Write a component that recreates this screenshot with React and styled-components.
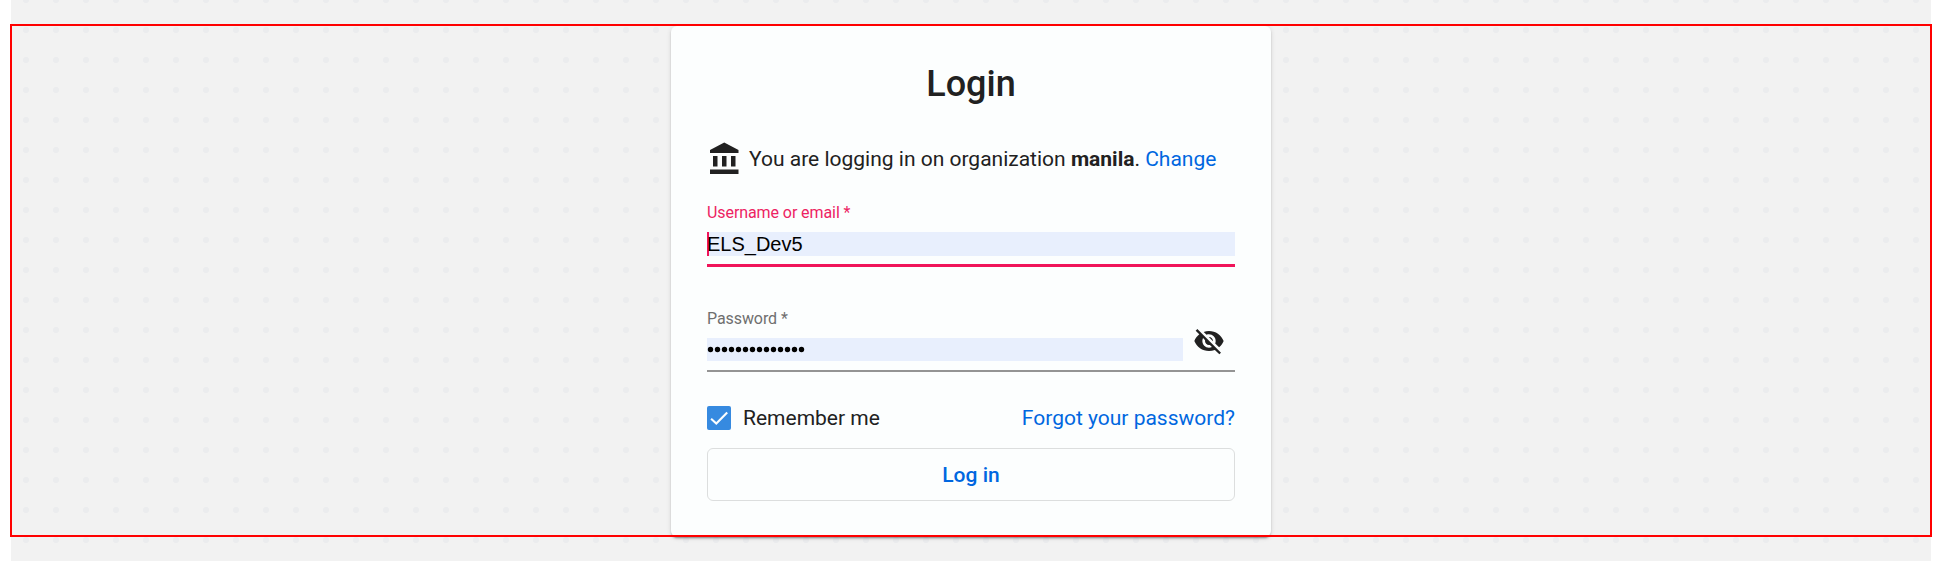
import React from "react";
import styled, { createGlobalStyle } from "styled-components";

const Global = createGlobalStyle`
  *, *::before, *::after { box-sizing: border-box; }
  body { margin: 0; background: #fff; }
`;

const Page = styled.div`
  height: 561px;
  margin: 0 11px;
  padding: 24px 0;
  font-family: Roboto, "Liberation Sans", sans-serif;
  font-size: 21px;
  line-height: 30px;
  color: #212121;
  background:
    radial-gradient(circle at 15px 15px, #ebecee 2.8px, transparent 3.4px) 0 -15px / 30px 30px,
    #f2f2f2;
`;

const Outline = styled.div`
  position: relative;
  display: flex;
  justify-content: center;
  height: 513px;
  margin: 0 -1px;
  padding-top: 2px;

  &::after {
    content: "";
    position: absolute;
    inset: 0;
    border: 2px solid #ff0000;
    pointer-events: none;
  }
`;

const Card = styled.main`
  display: flex;
  flex-direction: column;
  width: 600px;
  height: 511px;
  padding: 36px 36px 35px;
  border-radius: 6px;
  background: #fcfefe;
  box-shadow: 0 3px 1px -2px rgba(0, 0, 0, 0.2), 0 2px 2px 0 rgba(0, 0, 0, 0.14),
    0 1px 5px 0 rgba(0, 0, 0, 0.12);

  & > * {
    flex-shrink: 0;
  }
`;

const Title = styled.h1`
  margin: 0;
  font-size: 36px;
  line-height: 44px;
  font-weight: 500;
  text-align: center;
`;

const Organization = styled.div`
  display: flex;
  align-items: center;
  gap: 6px;
  height: 36px;
  margin-top: 35px;
  white-space: nowrap;
`;

const Icon = styled.svg`
  flex: none;
  width: ${(p) => p.$size}px;
  height: ${(p) => p.$size}px;
  fill: currentColor;
`;

const Link = styled.a`
  color: #0067e0;
  text-decoration: none;
`;

const Field = styled.div`
  display: flex;
  flex-direction: column;
  height: ${(p) => p.$height}px;
  margin-top: ${(p) => p.$top}px;
  border-bottom: ${(p) => (p.$active ? "3px solid #f0145a" : "2px solid #949494")};
`;

const Label = styled.label`
  height: 20px;
  margin-bottom: 9px;
  font-size: 16px;
  line-height: 20px;
  letter-spacing: -0.08px;
  color: ${(p) => (p.$active ? "#ed2363" : "#6f6f6f")};
`;

const InputRow = styled.div`
  display: flex;
  align-items: flex-start;
  height: 24px;
`;

const Value = styled.div`
  flex: 1;
  height: ${(p) => p.$height}px;
  border-left: ${(p) => (p.$active ? "2px solid #f0145a" : "0")};
  background: #e8effd;
  color: #000;
  font: 20px/24px "Liberation Sans", Arial, sans-serif;
  text-indent: ${(p) => (p.$active ? "-2px" : "0")};
`;

const Dots = styled.svg`
  display: block;
  width: 100px;
  height: 23px;
`;

const IconButton = styled.span`
  display: flex;
  justify-content: center;
  width: 52px;
  margin-top: -13px;
`;

const Options = styled.div`
  display: flex;
  align-items: center;
  justify-content: space-between;
  height: 30px;
  margin-top: 31px;
`;

const Remember = styled.label`
  display: flex;
  align-items: center;
  gap: 12px;
`;

const Checkbox = styled.span`
  width: 24px;
  height: 24px;
  border-radius: 2px;
  background: #368ae0;
`;

const Check = styled.svg`
  display: block;
  width: 24px;
  height: 24px;
  fill: none;
  stroke: #fcfefe;
  stroke-width: 2.1;
`;

const Submit = styled.button`
  height: 53px;
  margin-top: 15px;
  padding: 0;
  border: 1px solid #dcdede;
  border-radius: 6px;
  background: transparent;
  color: #0067e0;
  font: 500 21px/30px Roboto, sans-serif;
`;

export default function App() {
  return (
    <Page>
      <Global />
      <Outline>
        <Card>
          <Title>Login</Title>
          <Organization>
            <Icon $size={36} viewBox="0 0 24 24">
              <path d="M4 10v7h3v-7H4zm6 0v7h3v-7h-3zM2 22h19v-3H2v3zm14-12v7h3v-7h-3zm-4.500-9L2 6v2h19V6l-9.500-5z" />
            </Icon>
            <span>
              You are logging in on organization <b>manila</b>. <Link>Change</Link>
            </span>
          </Organization>
          <Field $active $top={26} $height={64}>
            <Label $active>Username or email *</Label>
            <InputRow>
              <Value $active $height={24}>ELS_Dev5</Value>
            </InputRow>
          </Field>
          <Field $top={42} $height={63}>
            <Label>Password *</Label>
            <InputRow>
              <Value $height={23}>
                <Dots viewBox="0 0 100 23" aria-label="Password">
                  {Array.from({ length: 14 }, (_, i) => (
                    <circle key={i} cx={3.5 + i * 7} cy="11.500" r="2.700" />
                  ))}
                </Dots>
              </Value>
              <IconButton>
                <Icon $size={32} viewBox="0 0 24 24">
                  <path d="M12 7c2.760 0 5 2.240 5 5 0 .650-.130 1.260-.360 1.830l2.920 2.920c1.510-1.260 2.700-2.890 3.430-4.750-1.730-4.390-6-7.500-11-7.500-1.400 0-2.740.250-3.980.700l2.160 2.160C10.740 7.130 11.350 7 12 7zM2 4.270l2.280 2.280.460.460C3.080 8.300 1.780 10.020 1 12c1.730 4.390 6 7.500 11 7.500 1.550 0 3.030-.300 4.380-.840l.420.420L19.730 22 21 20.730 3.270 3 2 4.270zM7.530 9.800l1.550 1.550c-.050.210-.080.430-.080.650 0 1.660 1.340 3 3 3 .220 0 .440-.030.650-.080l1.550 1.550c-.670.330-1.410.530-2.200.530-2.760 0-5-2.240-5-5 0-.790.200-1.530.530-2.200zm4.310-.780l3.150 3.150.020-.160c0-1.660-1.340-3-3-3l-.170.010z" />
                </Icon>
              </IconButton>
            </InputRow>
          </Field>
          <Options>
            <Remember>
              <Checkbox>
                <Check viewBox="0 0 24 24">
                  <path d="M4.100 12.700 9.300 17.500 20.200 6.500" />
                </Check>
              </Checkbox>
              Remember me
            </Remember>
            <Link>Forgot your password?</Link>
          </Options>
          <Submit>Log in</Submit>
        </Card>
      </Outline>
    </Page>
  );
}
